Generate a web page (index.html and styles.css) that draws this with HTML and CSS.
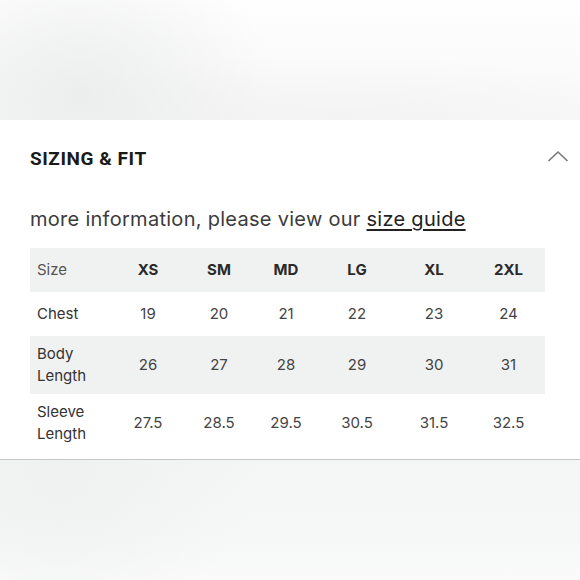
FILE: index.html
```html
<!DOCTYPE html>
<html>
<head>
<meta charset="utf-8">
<link rel="stylesheet" href="styles.css">
</head>
<body>
<div class="top-blur"></div>
<section class="panel">
  <div class="panel-head">
    <h2 class="title">SIZING &amp; FIT</h2>
    <svg class="chevron" width="22" height="14" viewBox="0 0 22 14"><path d="M1.5 12 L11 3 L20.5 12" fill="none" stroke="#777" stroke-width="1.6"/></svg>
  </div>
  <p class="intro">more information, please view our <a class="guide" href="#">size guide</a></p>
  <table class="sizes">
    <colgroup>
      <col class="c-label"><col class="c-xs"><col class="c-sm"><col class="c-md"><col class="c-lg"><col class="c-xl"><col class="c-2xl">
    </colgroup>
    <tr class="shade head">
      <td class="label">Size</td><th>XS</th><th>SM</th><th>MD</th><th>LG</th><th>XL</th><th>2XL</th>
    </tr>
    <tr class="short">
      <td class="label">Chest</td><td>19</td><td>20</td><td>21</td><td>22</td><td>23</td><td>24</td>
    </tr>
    <tr class="shade tall">
      <td class="label">Body<br>Length</td><td>26</td><td>27</td><td>28</td><td>29</td><td>30</td><td>31</td>
    </tr>
    <tr class="tall">
      <td class="label">Sleeve<br>Length</td><td>27.5</td><td>28.5</td><td>29.5</td><td>30.5</td><td>31.5</td><td>32.5</td>
    </tr>
  </table>
</section>
<div class="bottom-blur"></div>
</body>
</html>
```
FILE: styles.css
```css
html, body {
  margin: 0;
  padding: 0;
  width: 580px;
  height: 580px;
  overflow: hidden;
  background: #fff;
}
body {
  font-family: "Inter", "Liberation Sans", sans-serif;
  color: #333;
}
.top-blur {
  height: 120px;
  background:
    radial-gradient(ellipse 200px 150px at 80px 95px, rgba(234,235,235,0.85), rgba(240,240,240,0) 100%),
    radial-gradient(ellipse 320px 70px at 340px 125px, rgba(242,242,242,0.9), rgba(255,255,255,0) 100%),
    linear-gradient(180deg, #fefefe 0%, #f8f8f8 100%);
}
.panel {
  background: #fff;
  padding: 0 0 6px 30px;
  border-bottom: 1px solid #c6c6c6;
  height: 333px;
}
.panel-head {
  display: flex;
  justify-content: space-between;
  align-items: center;
  padding-top: 28px;
  padding-right: 11px;
}
.title {
  margin: 0;
  font-family: "Roboto", "Liberation Sans", sans-serif;
  font-weight: 700;
  font-size: 19px;
  letter-spacing: 0.55px;
  color: #1a1a1a;
  line-height: 22px;
}
.chevron {
  display: block;
  margin-top: -7px;
}
.intro {
  margin: 37px 0 0 0;
  font-size: 20px;
  letter-spacing: 0.28px;
  line-height: 24px;
  color: #3c3c3c;
}
.guide {
  color: #222;
  text-decoration: underline;
  text-underline-offset: 3px;
  text-decoration-thickness: 1.5px;
}
.sizes {
  margin-top: 17px;
  border-collapse: collapse;
  table-layout: fixed;
  width: 515px;
  font-size: 15px;
  color: #444;
}
.c-label { width: 82px; }
.c-xs { width: 72px; }
.c-sm { width: 70px; }
.c-md { width: 64px; }
.c-lg { width: 78px; }
.c-xl { width: 76px; }
.c-2xl { width: 73px; }
.sizes td, .sizes th {
  padding: 0;
  text-align: center;
  line-height: 22px;
  font-weight: 400;
}
.sizes th {
  font-weight: 700;
  color: #2a2a2a;
}
.sizes .label {
  text-align: left;
  padding-left: 7px;
  color: #333;
}
.head .label { color: #555; }
.shade { background: #f0f1f1; }
.head, .short { height: 44px; }
.tall { height: 58px; }
.bottom-blur {
  height: 120px;
  background:
    radial-gradient(ellipse 200px 140px at 60px 20px, rgba(239,240,240,0.9), rgba(245,246,246,0) 100%),
    linear-gradient(180deg, #f4f5f5 0%, #f6f7f7 60%, #fafafa 100%);
}
```
